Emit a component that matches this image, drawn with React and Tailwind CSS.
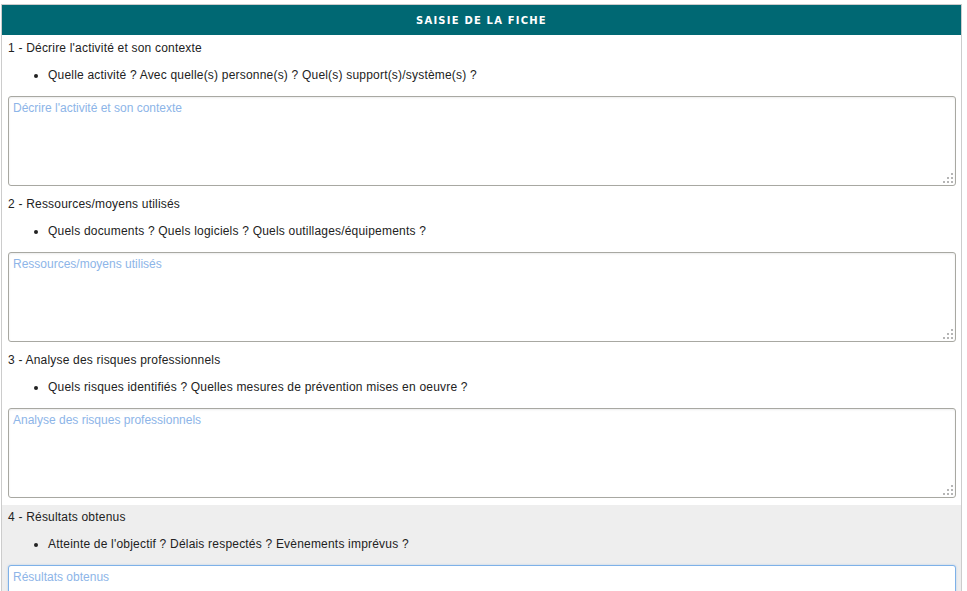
import { useState } from "react";

const sections = [
  {
    title: "1 - Décrire l'activité et son contexte",
    hint: "Quelle activité ? Avec quelle(s) personne(s) ? Quel(s) support(s)/système(s) ?",
    placeholder: "Décrire l'activité et son contexte",
  },
  {
    title: "2 - Ressources/moyens utilisés",
    hint: "Quels documents ? Quels logiciels ? Quels outillages/équipements ?",
    placeholder: "Ressources/moyens utilisés",
  },
  {
    title: "3 - Analyse des risques professionnels",
    hint: "Quels risques identifiés ? Quelles mesures de prévention mises en oeuvre ?",
    placeholder: "Analyse des risques professionnels",
    beforeActive: true,
  },
  {
    title: "4 - Résultats obtenus",
    hint: "Atteinte de l'objectif ? Délais respectés ? Evènements imprévus ?",
    placeholder: "Résultats obtenus",
    active: true,
  },
];

function Grip() {
  // petits points du coin de redimensionnement
  const dots = [
    [8, 0],
    [4, 4],
    [8, 4],
    [0, 8],
    [4, 8],
    [8, 8],
  ];
  return (
    <div className="absolute right-[3px] bottom-[3px] w-[10px] h-[10px] pointer-events-none">
      {dots.map(([x, y], i) => (
        <span
          key={i}
          className="absolute w-[2px] h-[2px] bg-[#b5b5b5]"
          style={{ left: x, top: y }}
        />
      ))}
    </div>
  );
}

function Section({ s }) {
  const [value, setValue] = useState("");
  return (
    <div
      className={`pl-[6px] pr-[5px] ${s.active ? "pt-[5px]" : "pt-[6px]"} ${
        s.beforeActive ? "pb-[7px]" : "pb-[5px]"
      } ${s.active ? "bg-[#eeeeee]" : "bg-white"}`}
    >
      <div className="h-[15px] leading-[15px] tracking-[0.2px]">{s.title}</div>
      <ul className="list-disc pl-[40px] mt-[12px]">
        <li className="h-[15px] leading-[15px] tracking-[0.2px]">{s.hint}</li>
      </ul>
      <div className="relative mt-[13px]">
        <textarea
          value={value}
          onChange={(e) => setValue(e.target.value)}
          placeholder={s.placeholder}
          className={`block w-full h-[90px] resize-none rounded-[3px] border bg-white px-[4px] pt-[4px] pb-[3px] text-[12px] leading-[15px] outline-none placeholder:text-[#8db5e8] ${
            s.active
              ? "border-[#7eb1e8] shadow-[0_0_2px_rgba(126,177,232,0.6)]"
              : "border-[#a8a8a2] shadow-[inset_0_1px_2px_rgba(0,0,0,0.08)]"
          }`}
          style={{ fontFamily: '"Liberation Sans", Arial, sans-serif' }}
        />
        {!s.active && <Grip />}
      </div>
    </div>
  );
}

export default function App() {
  return (
    <div
      className="w-[967px] h-[591px] overflow-hidden bg-white pt-[4px] text-[12px] text-[#222]"
      style={{ fontFamily: '"Liberation Sans", Arial, sans-serif' }}
    >
      <div className="ml-[1px] w-[961px] border border-[#cccccc] border-b-0 min-h-[600px]">
        <div
          className="h-[30px] bg-[#006873] text-white flex items-center justify-center font-bold text-[10px] tracking-[1.2px] uppercase"
          style={{ fontFamily: '"DejaVu Sans", Verdana, sans-serif' }}
        >
          Saisie de la fiche
        </div>
        {sections.map((s, i) => (
          <Section key={i} s={s} />
        ))}
      </div>
    </div>
  );
}
